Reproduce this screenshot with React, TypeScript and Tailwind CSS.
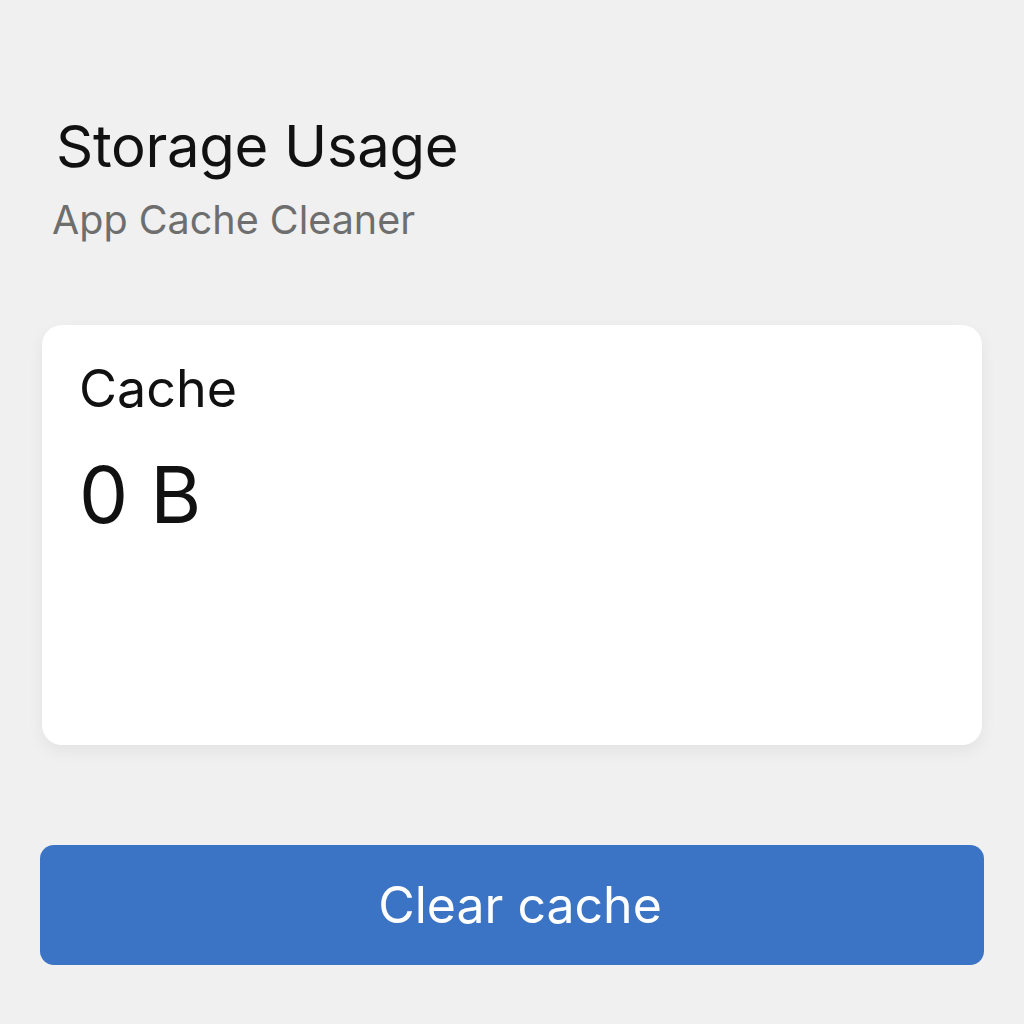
export default function App() {
  return (
    <div className="min-h-[1024px] w-[1024px] bg-[#f0f0f0] font-['Inter',sans-serif]">
      <div className="flex flex-col px-[40px] pt-[110px]">
        <h1 className="ml-[16px] text-[58px] leading-[72px] text-[#111111] tracking-[-0.3px]">Storage Usage</h1>
        <p className="ml-[12px] mt-[14px] text-[39.5px] leading-[48px] text-[#6e6e6e]">App Cache Cleaner</p>
        <div className="mt-[81px] mx-[2px] h-[420px] rounded-[20px] bg-white px-[37px] pt-[32px] shadow-[0_6px_16px_rgba(0,0,0,0.06)]">
          <div className="text-[52px] leading-[64px] text-[#111111]">Cache</div>
          <div className="mt-[29px] text-[78px] leading-[90px] text-[#111111]">0 B</div>
        </div>
        <button className="mt-[100px] flex h-[120px] w-full items-center justify-center rounded-[14px] bg-[#3b73c5] pl-[16px] text-[50px] text-white">
          Clear cache
        </button>
      </div>
    </div>
  );
}
